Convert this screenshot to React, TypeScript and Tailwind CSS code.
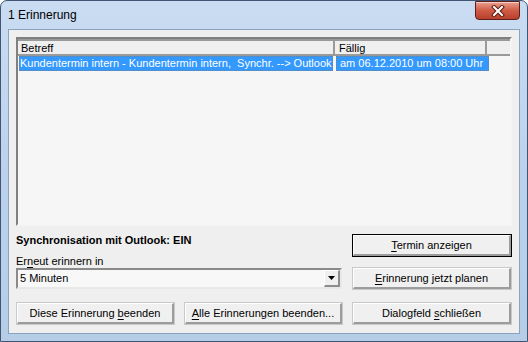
import type { ReactNode } from "react";

const UI = "font-['Liberation_Sans',Arial,sans-serif] text-[11px] leading-[13px] text-black";

function Key({ children }: { children: ReactNode }) {
  return <span className="underline decoration-1 underline-offset-[2px]">{children}</span>;
}

function Btn({
  children,
  w,
  isDefault,
}: {
  children: ReactNode;
  w: string;
  isDefault?: boolean;
}) {
  return (
    <button
      type="button"
      className={`${w} h-[23px] shrink-0 ${isDefault ? "border border-black" : "border border-[#c9c9c9]"} bg-[#f0f0f0]`}
    >
      <div className="flex h-full w-full items-center justify-center border-t border-l border-white border-b-2 border-r-2 border-b-[#9c9c9c] border-r-[#9c9c9c]">
        <span className="whitespace-pre">{children}</span>
      </div>
    </button>
  );
}

function CloseButton() {
  return (
    <div className="flex h-[19px] w-[45px] items-center justify-center rounded-b-[4px] border border-[#5e1f1a] bg-gradient-to-b from-[#e8a090] via-[#cf5b45] to-[#b8402c] shadow-[inset_0_1px_0_rgba(255,255,255,0.5)]">
      <svg width="14" height="12" viewBox="0 0 14 12">
        <path d="M3 2 L11 10 M11 2 L3 10" stroke="#5a1c14" strokeWidth="4" strokeLinecap="square" />
        <path d="M3 2 L11 10 M11 2 L3 10" stroke="#ffffff" strokeWidth="2" strokeLinecap="square" />
      </svg>
    </div>
  );
}

function ListBox() {
  return (
    <div className="h-[189px] w-[496px] border-2 border-t-[#808080] border-l-[#808080] border-b-[#f4f4f4] border-r-[#f4f4f4] bg-[#f6f6f6]">
      <div className="flex h-[17px] border-t-2 border-b-2 border-[#9a9a9a] bg-[#efefef]">
        <div className="flex w-[317px] items-center border-r-2 border-[#9a9a9a] pl-[3px] pt-[1px]">Betreff</div>
        <div className="flex w-[152px] items-center border-r-2 border-[#9a9a9a] pl-[4px] pt-[1px]">Fällig</div>
        <div className="flex-1" />
      </div>
      <div className="flex h-[15px]">
        <div className="w-[317px] pl-[1px] pr-[2px]">
          <div className="flex h-full items-center whitespace-pre border border-dotted border-[#cc6600]/40 bg-[#3399ff] text-white">
            Kundentermin intern - Kundentermin intern,  Synchr. --&gt; Outlook
          </div>
        </div>
        <div className="w-[154px] pl-[1px]">
          <div className="flex h-full items-center border border-dotted border-[#cc6600]/40 bg-[#3399ff] pl-[3px] text-white">
            am 06.12.2010 um 08:00 Uhr
          </div>
        </div>
      </div>
    </div>
  );
}

function Combo() {
  return (
    <div className="flex h-[21px] w-[326px] border-2 border-t-[#8a8a8a] border-l-[#8a8a8a] border-b-[#e8e8e8] border-r-[#e8e8e8] bg-[#f8f8f8]">
      <div className="flex flex-1 items-center pl-[2px]">5 Minuten</div>
      <div className="flex w-[16px] items-center justify-center border-t border-l border-white border-b-2 border-r-2 border-b-[#8c8c8c] border-r-[#8c8c8c] bg-[#efefef]">
        <svg width="7" height="4" viewBox="0 0 7 4">
          <path d="M0 0 H7 L3.5 4 Z" fill="#000" />
        </svg>
      </div>
    </div>
  );
}

export default function App() {
  return (
    <div className={`${UI} h-[342px] w-[528px] bg-white`}>
      <div className="flex h-[342px] w-[528px] flex-col rounded-t-[7px] border border-[#3f5573] bg-gradient-to-b from-[#c9dcf2] via-[#bcd2ec] to-[#b6cde8] px-[7px] pb-[7px]">
        <div className="flex h-[28px] items-start justify-between">
          <div className="flex h-[28px] items-center font-['Liberation_Sans',Arial,sans-serif] text-[12px]">
            1 Erinnerung
          </div>
          <CloseButton />
        </div>
        <div className="flex flex-1 flex-col border border-[#8ba2bf] bg-[#efefef] px-[7px] pt-[7px]">
          <ListBox />
          <div className="mt-[8px] flex">
            <div className="flex w-[326px] flex-col">
              <div className="h-[12px] font-bold leading-[12px]">Synchronisation mit Outlook: EIN</div>
              <div className="mt-[9px] h-[12px] leading-[12px]">
                Er<Key>n</Key>eut erinnern in
              </div>
              <div className="mt-[1px]">
                <Combo />
              </div>
            </div>
            <div className="ml-[10px] flex w-[160px] flex-col gap-[10px]">
              <Btn w="w-[160px]" isDefault>
                <Key>T</Key>ermin anzeigen
              </Btn>
              <Btn w="w-[160px]">
                <Key>E</Key>rinnerung jetzt planen
              </Btn>
            </div>
          </div>
          <div className="mt-[12px] flex gap-[9px]">
            <Btn w="w-[159px]">
              Diese Erinnerung <Key>b</Key>eenden
            </Btn>
            <Btn w="w-[159px]">
              <Key>A</Key>lle Erinnerungen beenden...
            </Btn>
            <Btn w="w-[160px]">
              Dialogfeld <Key>s</Key>chließen
            </Btn>
          </div>
        </div>
      </div>
    </div>
  );
}
